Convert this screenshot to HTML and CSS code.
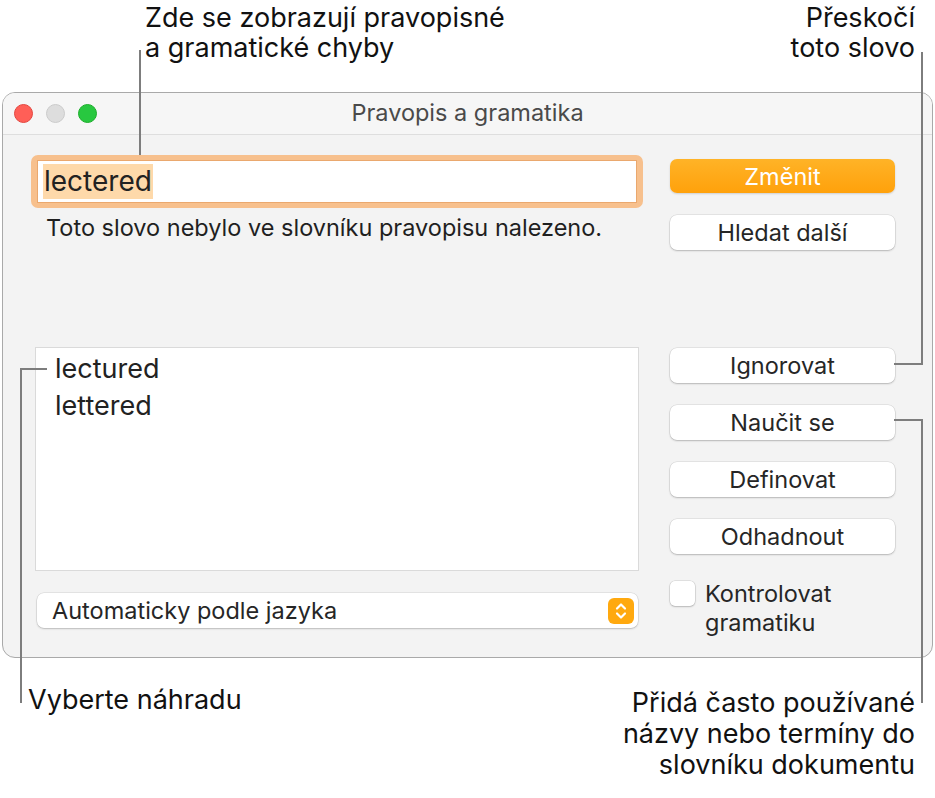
FILE: index.html
```html
<!DOCTYPE html>
<html lang="cs">
<head>
    <meta charset="UTF-8">
    <meta name="viewport" content="width=device-width, initial-scale=1.0">
    <title>Pravopis a gramatika</title>
    <link rel="stylesheet" href="styles.css">
</head>
<body>
    <div class="page">
        <div class="notes-top">
            <p class="note note-left">Zde se zobrazují pravopisné<br>a gramatické chyby</p>
            <p class="note note-right">Přeskočí<br>toto slovo</p>
        </div>

        <div class="window">
            <div class="titlebar">
                <div class="lights">
                    <span class="light red"></span>
                    <span class="light gray"></span>
                    <span class="light green"></span>
                </div>
                <div class="title">Pravopis a gramatika</div>
            </div>

            <div class="panel">
                <div class="left-col">
                    <div class="field-ring">
                        <div class="field"><span class="selected">lectered</span></div>
                    </div>
                    <p class="status">Toto slovo nebylo ve slovníku pravopisu nalezeno.</p>
                    <ul class="suggestions">
                        <li>lectured</li>
                        <li>lettered</li>
                    </ul>
                    <div class="popup">
                        <span>Automaticky podle jazyka</span>
                        <svg class="stepper" width="26" height="26" viewBox="0 0 26 26">
                            <rect x="0" y="0" width="26" height="26" rx="6" fill="#ffa90f"/>
                            <path d="M9 10.5 L13 6.5 L17 10.5" fill="none" stroke="#fff" stroke-width="2.2" stroke-linecap="round" stroke-linejoin="round"/>
                            <path d="M9 15.5 L13 19.5 L17 15.5" fill="none" stroke="#fff" stroke-width="2.2" stroke-linecap="round" stroke-linejoin="round"/>
                        </svg>
                    </div>
                </div>

                <div class="right-col">
                    <button class="btn primary">Změnit</button>
                    <button class="btn">Hledat další</button>
                    <button class="btn group-start">Ignorovat</button>
                    <button class="btn">Naučit se</button>
                    <button class="btn">Definovat</button>
                    <button class="btn">Odhadnout</button>
                    <label class="check">
                        <span class="box"></span>
                        <span class="check-label">Kontrolovat<br>gramatiku</span>
                    </label>
                </div>
            </div>
        </div>

        <div class="notes-bottom">
            <p class="note note-choose">Vyberte náhradu</p>
            <p class="note note-learn">Přidá často používané<br>názvy nebo termíny do<br>slovníku dokumentu</p>
        </div>

        <!-- callout lines -->
        <div class="line line-errors"></div>
        <div class="line line-skip-v"></div>
        <div class="line line-skip-h"></div>
        <div class="line line-learn-h"></div>
        <div class="line line-learn-v"></div>
        <div class="line line-choose-h"></div>
        <div class="line line-choose-v"></div>
    </div>
</body>
</html>
```

FILE: styles.css
```css
body {
    margin: 0;
    padding: 0;
    background-color: #fff;
    font-family: 'Inter', 'Noto Sans', sans-serif;
    color: #1d1d1d;
}

.page {
    position: relative;
    width: 935px;
    height: 798px;
    overflow: hidden;
}

.note {
    margin: 0;
    font-size: 27px;
    line-height: 30px;
    color: #111;
}

.notes-top {
    display: flex;
    justify-content: space-between;
    height: 92px;
}

.note-left {
    padding-left: 145px;
    padding-top: 3px;
}

.note-right {
    text-align: right;
    padding-right: 20px;
    padding-top: 3px;
}

.window {
    box-sizing: border-box;
    margin-left: 2px;
    width: 931px;
    height: 566px;
    border: 1px solid #a9a9a9;
    border-radius: 13px;
    background-color: #f3f3f3;
    overflow: hidden;
}

.titlebar {
    position: relative;
    height: 41px;
    border-bottom: 1px solid #dedede;
    background-color: #f6f6f6;
    display: flex;
    align-items: center;
    justify-content: center;
}

.lights {
    position: absolute;
    left: 11px;
    top: 11px;
    display: flex;
    gap: 13px;
}

.light {
    width: 17px;
    height: 17px;
    border-radius: 50%;
    border: 1px solid transparent;
}

.light.red {
    background-color: #ff5f57;
    border-color: #e2463f;
}

.light.gray {
    background-color: #dddddd;
    border-color: #cbcbcb;
}

.light.green {
    background-color: #28c840;
    border-color: #1dad2b;
}

.title {
    font-size: 23.5px;
    color: #4a4a4a;
    padding-bottom: 3px;
}

.panel {
    display: grid;
    grid-template-columns: 612px 225px;
    column-gap: 27px;
    padding-left: 28px;
}

.left-col {
    padding-top: 20px;
}

.field-ring {
    box-sizing: border-box;
    height: 53px;
    padding: 5px 6px;
    border-radius: 7px;
    background-color: #f7c08d;
}

.field {
    box-sizing: border-box;
    height: 43px;
    background-color: #fff;
    border: 1px solid #eaa86e;
    padding: 1px 5px;
    display: flex;
    align-items: center;
    font-size: 28px;
    color: #222;
}

.selected {
    background-color: #fed9aa;
    padding: 0 1px;
    line-height: 35px;
}

.status {
    margin: 6px 0 0 15px;
    font-size: 23.5px;
    line-height: 28px;
    color: #1f1f1f;
}

.suggestions {
    box-sizing: border-box;
    list-style: none;
    margin: 105px 0 0 4px;
    padding: 2px 0 0 19px;
    width: 604px;
    height: 224px;
    background-color: #fff;
    border: 1px solid #dadada;
    font-size: 27px;
    line-height: 37px;
    color: #222;
}

.popup {
    box-sizing: border-box;
    margin: 22px 0 0 6px;
    width: 601px;
    height: 35px;
    border-radius: 7px;
    background-color: #fff;
    box-shadow: 0 0 0 0.5px rgba(0, 0, 0, 0.12), 0 1px 2px rgba(0, 0, 0, 0.18);
    display: flex;
    align-items: center;
    justify-content: space-between;
    padding: 0 4px 0 15px;
    font-size: 23.5px;
    color: #262626;
}

.right-col {
    padding-top: 24px;
    display: flex;
    flex-direction: column;
    gap: 22px;
}

.btn {
    height: 35px;
    border: none;
    border-radius: 7px;
    background-color: #fff;
    box-shadow: 0 0 0 0.5px rgba(0, 0, 0, 0.12), 0 1px 2px rgba(0, 0, 0, 0.2);
    font-family: inherit;
    font-size: 23.5px;
    color: #262626;
    padding: 0;
    flex-shrink: 0;
}

.btn.primary {
    height: 34px;
    background: linear-gradient(#ffb327, #ffa10b);
    color: #fff;
    box-shadow: 0 1px 2px rgba(0, 0, 0, 0.15);
}

.btn.group-start {
    margin-top: 76px;
}

.check {
    display: flex;
    align-items: flex-start;
    gap: 10px;
    margin-top: 5px;
}

.box {
    box-sizing: border-box;
    width: 25px;
    height: 25px;
    border-radius: 5px;
    background-color: #fff;
    box-shadow: 0 0 0 0.5px rgba(0, 0, 0, 0.15), 0 1px 2px rgba(0, 0, 0, 0.18);
    flex-shrink: 0;
}

.check-label {
    font-size: 23.5px;
    line-height: 29px;
    margin-top: -2px;
    color: #262626;
}

.notes-bottom {
    display: flex;
    justify-content: space-between;
    align-items: flex-start;
    margin-top: 27px;
}

.note-choose {
    padding-left: 28px;
}

.note-learn {
    text-align: right;
    padding-right: 20px;
    line-height: 31px;
    padding-top: 2px;
}

/* callout lines sit over the window */
.line {
    position: absolute;
    background-color: #7d7d7d;
}

.line-errors {
    left: 139px;
    top: 50px;
    width: 2px;
    height: 105px;
}

.line-skip-v {
    left: 921px;
    top: 52px;
    width: 2px;
    height: 313px;
}

.line-skip-h {
    left: 894px;
    top: 363px;
    width: 29px;
    height: 2px;
}

.line-learn-h {
    left: 894px;
    top: 419px;
    width: 29px;
    height: 2px;
}

.line-learn-v {
    left: 921px;
    top: 419px;
    width: 2px;
    height: 284px;
}

.line-choose-h {
    left: 20px;
    top: 368px;
    width: 27px;
    height: 2px;
}

.line-choose-v {
    left: 20px;
    top: 368px;
    width: 2px;
    height: 335px;
}
```
